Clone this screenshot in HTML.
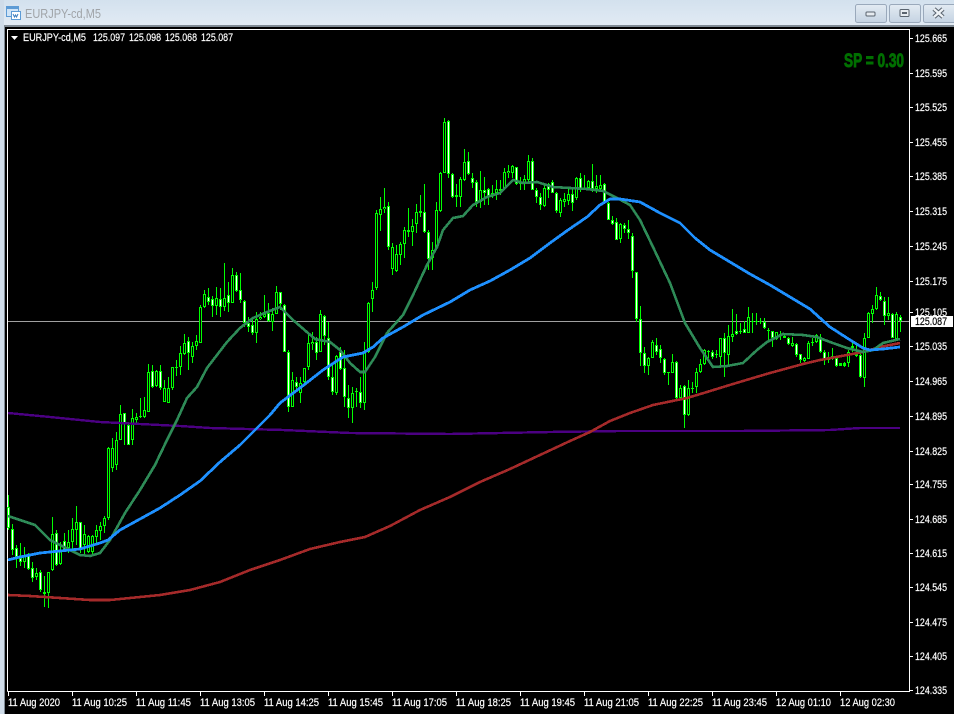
<!DOCTYPE html>
<html><head><meta charset="utf-8"><title>EURJPY-cd,M5</title>
<style>html,body{margin:0;padding:0;background:#000;width:954px;height:714px;overflow:hidden}svg{display:block}text{font-family:"Liberation Sans",sans-serif}</style></head>
<body>
<svg width="954" height="714" viewBox="0 0 954 714" xmlns="http://www.w3.org/2000/svg">
<defs><linearGradient id="t" x1="0" y1="0" x2="0" y2="1"><stop offset="0" stop-color="#d3e1ee"/><stop offset="1" stop-color="#e2ebf4"/></linearGradient>
<linearGradient id="b" x1="0" y1="0" x2="0" y2="1"><stop offset="0" stop-color="#e3ebf3"/><stop offset="1" stop-color="#c5d3e2"/></linearGradient></defs>
<rect width="954" height="714" fill="#000"/>
<rect width="954" height="26" fill="url(#t)"/>
<rect y="25" width="954" height="2" fill="#7f8a94"/>
<rect width="4" height="714" fill="#cfdce9"/>
<rect x="4" y="27" width="1" height="687" fill="#7f8a94"/>
<!-- window icon -->
<rect x="6.500" y="6.500" width="12" height="10" fill="#cfe4f7" stroke="#5d9bd5"/><rect x="7" y="7" width="11" height="2" fill="#5d9bd5"/>
<rect x="11.500" y="11.500" width="9" height="8" fill="#fff" stroke="#5d9bd5"/><path d="M13 14l1.500 3 1-2 1 2 1.500-3" fill="none" stroke="#3e7fbf"/>
<text x="25" y="18" font-size="13" fill="#a0a4a8" textLength="76" lengthAdjust="spacingAndGlyphs">EURJPY-cd,M5</text>
<!-- buttons -->
<g stroke="#9aa9bb" fill="url(#b)"><rect x="855.500" y="4.500" width="31" height="18" rx="2"/><rect x="889.500" y="4.500" width="31" height="18" rx="2"/><rect x="923.500" y="4.500" width="35" height="18" rx="2"/></g>
<rect x="866" y="12" width="9" height="4" fill="#e6ebf0" stroke="#59636e" rx="1"/>
<rect x="900" y="9.500" width="9" height="7" fill="#e6ebf0" stroke="#59636e" rx="1"/><rect x="902" y="12" width="5" height="2" fill="#59636e"/>
<path d="M934 9l9 8M943 9l-9 8" stroke="#59636e" stroke-width="4.500"/><path d="M934 9l9 8M943 9l-9 8" stroke="#eef2f6" stroke-width="2.400"/>
<!-- chart frame -->
<path d="M7.500 691.500V29.500H909.500V691.500H7.500" fill="none" stroke="#fff"/>
<g shape-rendering="crispEdges" fill="none">
<path d="M8 321.500H909" stroke="#a0a0a0"/>
<!-- axis ticks -->
<path stroke="#fff" d="M910 38.500h3M910 73.500h3M910 107.500h3M910 142.500h3M910 176.500h3M910 211.500h3M910 246.500h3M910 281.500h3M910 312.500h3M910 346.500h3M910 381.500h3M910 416.500h3M910 451.500h3M910 484.500h3M910 519.500h3M910 553.500h3M910 587.500h3M910 622.500h3M910 656.500h3M910 690.500h3M8.500 692v4M72.500 692v4M136.500 692v4M200.500 692v4M264.500 692v4M328.500 692v4M392.500 692v4M456.500 692v4M520.500 692v4M584.500 692v4M648.500 692v4M712.500 692v4M776.500 692v4M840.500 692v4"/>
<!-- wicks -->
<path stroke="#00ff00" d="M8.500 495V530M12.500 524V555M16.500 545V568M20.500 543V566M24.500 547V568M28.500 553V570M32.500 562V582M36.500 568V580M40.500 570V592M44.500 576V607M48.500 572V608M52.500 517V571M56.500 530V566M60.500 542V565M64.500 533V552M68.500 530V553M72.500 518V550M76.500 506V545M80.500 522V553M84.500 525V555M88.500 535V553M92.500 535V555M96.500 525V545M100.500 522V540M104.500 516V533M108.500 447V520M112.500 438V472M116.500 432V470M120.500 405V440M124.500 413V445M128.500 423V445M132.500 409V445M136.500 413V425M140.500 398V418M144.500 397V418M148.500 364V412M152.500 365V388M156.500 370V387M160.500 365V390M164.500 380V402M168.500 377V403M172.500 367V390M176.500 360V376M180.500 346V375M184.500 334V355M188.500 337V370M192.500 342V363M196.500 335V350M200.500 305V343M204.500 290V308M208.500 288V305M212.500 296V317M216.500 287V315M220.500 288V317M224.500 263V311M228.500 282V312M232.500 268V303M236.500 272V292M240.500 273V303M244.500 300V327M248.500 317V332M252.500 317V335M256.500 312V343M260.500 312V320M264.500 295V318M268.500 303V322M272.500 308V331M276.500 286V314M280.500 292V310M284.500 304V352M288.500 350V412M292.500 372V407M296.500 377V390M300.500 377V403M304.500 368V383M308.500 333V370M312.500 332V350M316.500 337V360M320.500 310V352M324.500 315V345M328.500 322V380M332.500 365V395M336.500 355V395M340.500 347V370M344.500 350V407M348.500 385V418M352.500 387V423M356.500 388V407M360.500 377V408M364.500 342V410M368.500 302V353M372.500 282V312M376.500 210V290M380.500 197V231M384.500 188V213M388.500 202V250M392.500 243V275M396.500 245V272M400.500 242V265M404.500 227V258M408.500 208V237M412.500 219V246M416.500 204V233M420.500 195V217M424.500 184V233M428.500 230V270M432.500 242V270M436.500 202V250M440.500 172V212M444.500 118V173M448.500 120V178M452.500 173V198M456.500 184V207M460.500 177V207M464.500 149V181M468.500 152V175M472.500 173V188M476.500 180V207M480.500 171V208M484.500 177V205M488.500 188V205M492.500 185V198M496.500 180V200M500.500 180V195M504.500 168V190M508.500 165V178M512.500 165V178M516.500 167V185M520.500 177V190M524.500 175V190M528.500 155V182M532.500 158V190M536.500 188V203M540.500 193V210M544.500 185V207M548.500 183V198M552.500 180V193M556.500 192V213M560.500 198V217M564.500 193V207M568.500 187V205M572.500 187V211M576.500 177V200M580.500 173V192M584.500 175V190M588.500 180V188M592.500 164V192M596.500 175V193M600.500 175V192M604.500 183V203M608.500 202V220M612.500 216V225M616.500 218V240M620.500 223V243M624.500 223V233M628.500 220V239M632.500 233V278M636.500 272V322M640.500 306V366M644.500 347V373M648.500 357V375M652.500 340V358M656.500 338V355M660.500 345V363M664.500 358V375M668.500 372V385M672.500 354V373M676.500 361V399M680.500 385V399M684.500 385V428M688.500 380V416M692.500 382V393M696.500 368V393M700.500 359V373M704.500 349V365M708.500 350V358M712.500 350V359M716.500 350V358M720.500 338V368M724.500 333V377M728.500 325V365M732.500 309V342M736.500 314V335M740.500 323V334M744.500 321V333M748.500 307V333M752.500 313V333M756.500 313V325M760.500 318V324M764.500 318V329M768.500 328V340M772.500 331V347M776.500 332V340M780.500 331V340M784.500 333V338M788.500 337V345M792.500 337V347M796.500 343V357M800.500 354V363M804.500 357V362M808.500 341V359M812.500 338V346M816.500 334V343M820.500 334V353M824.500 350V365M828.500 352V363M832.500 348V360M836.500 357V367M840.500 363V366M844.500 362V367M848.500 350V367M852.500 343V352M856.500 343V357M860.500 352V378M864.500 333V387M868.500 312V338M872.500 305V323M876.500 287V310M880.500 292V301M884.500 297V325M888.500 297V320M892.500 313V338M896.500 312V340M900.500 315V332"/>
<!-- bodies -->
<path stroke="#00ff00" stroke-width="3" d="M8.500 507V528M12.500 529V550M16.500 548V557M20.500 558V562M24.500 555V562M28.500 555V569M32.500 568V578M36.500 573V577M40.500 572V590M44.500 592V594M48.500 572V593M52.500 534V570M56.500 533V565M60.500 550V564M64.500 541V552M68.500 542V548M72.500 529V542M76.500 522V530M80.500 522V549M84.500 534V545M88.500 536V552M92.500 536V552M96.500 530V537M100.500 526V531M104.500 518V526M108.500 448V518M112.500 448V468M116.500 440V465M120.500 414V440M124.500 413V423M128.500 425V445M132.500 418V440M136.500 417V420M140.500 416V417M144.500 410V417M148.500 372V412M152.500 371V387M156.500 371V386M160.500 371V388M164.500 388V402M168.500 388V403M172.500 367V388M176.500 367V368M180.500 353V367M184.500 343V354M188.500 341V353M192.500 346V357M196.500 341V346M200.500 307V343M204.500 294V307M208.500 297V302M212.500 299V306M216.500 298V306M220.500 299V307M224.500 298V307M228.500 295V303M232.500 275V303M236.500 275V291M240.500 290V300M244.500 301V323M248.500 323V327M252.500 325V333M256.500 319V333M260.500 317V319M264.500 314V317M268.500 313V321M272.500 314V322M276.500 292V314M280.500 292V304M284.500 305V352M288.500 352V407M292.500 380V407M296.500 382V387M300.500 383V393M304.500 368V382M308.500 343V367M312.500 342V344M316.500 342V353M320.500 314V352M324.500 316V336M328.500 338V377M332.500 377V392M336.500 356V393M340.500 352V369M344.500 368V397M348.500 398V408M352.500 393V408M356.500 391V392M360.500 392V403M364.500 352V403M368.500 303V352M372.500 290V299M376.500 213V288M380.500 209V215M384.500 207V209M388.500 206V247M392.500 247V269M396.500 254V271M400.500 244V255M404.500 230V244M408.500 230V232M412.500 226V232M416.500 212V224M420.500 211V213M424.500 212V232M428.500 232V259M432.500 250V258M436.500 210V248M440.500 173V211M444.500 122V173M448.500 121V174M452.500 174V197M456.500 195V197M460.500 179V197M464.500 162V180M468.500 161V174M472.500 178V183M476.500 182V202M480.500 190V202M484.500 190V193M488.500 189V196M492.500 193V195M496.500 189V193M500.500 189V191M504.500 172V189M508.500 171V173M512.500 166V173M516.500 167V184M520.500 183V184M524.500 179V183M528.500 161V180M532.500 161V190M536.500 190V197M540.500 197V205M544.500 188V206M548.500 184V190M552.500 182V193M556.500 193V211M560.500 200V213M564.500 199V202M568.500 194V201M572.500 194V203M576.500 178V198M580.500 178V190M584.500 188V189M588.500 181V188M592.500 181V189M596.500 186V189M600.500 185V189M604.500 184V203M608.500 203V220M612.500 220V224M616.500 222V240M620.500 224V239M624.500 225V229M628.500 229V233M632.500 236V271M636.500 272V319M640.500 319V353M644.500 353V366M648.500 358V366M652.500 342V358M656.500 345V352M660.500 349V358M664.500 359V373M668.500 372V373M672.500 362V373M676.500 362V398M680.500 388V398M684.500 386V415M688.500 388V415M692.500 388V389M696.500 372V387M700.500 364V372M704.500 350V364M708.500 351V352M712.500 352V357M716.500 354V355M720.500 338V357M724.500 338V353M728.500 336V355M732.500 334V337M736.500 331V334M740.500 331V332M744.500 329V333M748.500 317V333M752.500 321V322M756.500 321V322M760.500 321V322M764.500 322V328M768.500 330V331M772.500 331V338M776.500 332V339M780.500 334V336M784.500 336V338M788.500 338V344M792.500 343V346M796.500 344V355M800.500 354V360M804.500 358V361M808.500 343V359M812.500 342V343M816.500 335V342M820.500 337V352M824.500 352V360M828.500 357V360M832.500 356V358M836.500 358V366M840.500 363V366M844.500 363V366M848.500 352V363M852.500 346V348M856.500 353V356M860.500 355V377M864.500 338V378M868.500 313V338M872.500 309V314M876.500 295V309M880.500 296V300M884.500 301V316M888.500 313V316M892.500 314V338M896.500 314V339M900.500 317V321"/>
<!-- bull centres -->
<path stroke="#000" d="M24.500 556V561M36.500 574V576M48.500 573V592M52.500 535V569M60.500 551V563M68.500 543V547M72.500 530V541M76.500 523V529M84.500 535V544M88.500 537V551M92.500 537V551M96.500 531V536M100.500 527V530M104.500 519V525M108.500 449V517M112.500 449V467M116.500 441V464M120.500 415V439M132.500 419V439M136.500 418V419M144.500 411V416M148.500 373V411M156.500 372V385M164.500 389V401M168.500 389V402M172.500 368V387M180.500 354V366M184.500 344V353M192.500 347V356M196.500 342V345M200.500 308V342M204.500 295V306M216.500 299V305M224.500 299V306M232.500 276V302M256.500 320V332M260.500 318V319M264.500 315V316M272.500 315V321M276.500 293V313M292.500 381V406M300.500 384V392M304.500 369V381M308.500 344V366M312.500 343V344M320.500 315V351M336.500 357V392M352.500 394V407M364.500 353V402M368.500 304V351M372.500 291V298M376.500 214V287M380.500 210V214M384.500 208V209M392.500 248V268M396.500 255V270M400.500 245V254M404.500 231V243M412.500 227V231M416.500 213V223M432.500 251V257M436.500 211V247M440.500 174V210M444.500 123V172M460.500 180V196M464.500 163V179M480.500 191V201M492.500 194V195M496.500 190V192M504.500 173V188M508.500 172V173M512.500 167V172M524.500 180V182M528.500 162V179M544.500 189V205M560.500 201V212M564.500 200V201M568.500 195V200M576.500 179V197M588.500 182V187M596.500 187V188M600.500 186V188M620.500 225V238M648.500 359V365M652.500 343V357M672.500 363V372M680.500 389V397M688.500 389V414M696.500 373V386M700.500 365V371M704.500 351V363M720.500 339V356M728.500 337V354M732.500 335V336M748.500 318V332M776.500 333V338M792.500 344V345M804.500 359V360M808.500 344V358M816.500 336V341M828.500 358V359M848.500 353V362M864.500 339V377M868.500 314V337M872.500 310V313M876.500 296V308M888.500 314V315M896.500 315V338"/>
<!-- bear centres -->
<path stroke="#fff" d="M8.500 508V527M12.500 530V549M16.500 549V556M20.500 559V561M28.500 556V568M32.500 569V577M40.500 573V589M56.500 534V564M64.500 542V551M80.500 523V548M124.500 414V422M128.500 426V444M152.500 372V386M160.500 372V387M188.500 342V352M208.500 298V301M212.500 300V305M220.500 300V306M228.500 296V302M236.500 276V290M240.500 291V299M244.500 302V322M248.500 324V326M252.500 326V332M268.500 314V320M280.500 293V303M284.500 306V351M288.500 353V406M296.500 383V386M316.500 343V352M324.500 317V335M328.500 339V376M332.500 378V391M340.500 353V368M344.500 369V396M348.500 399V407M360.500 393V402M388.500 207V246M424.500 213V231M428.500 233V258M448.500 122V173M452.500 175V196M468.500 162V173M472.500 179V182M476.500 183V201M484.500 191V192M488.500 190V195M516.500 168V183M532.500 162V189M536.500 191V196M540.500 198V204M548.500 185V189M552.500 183V192M556.500 194V210M572.500 195V202M580.500 179V189M592.500 182V188M604.500 185V202M608.500 204V219M612.500 221V223M616.500 223V239M624.500 226V228M628.500 230V232M632.500 237V270M636.500 273V318M640.500 320V352M644.500 354V365M656.500 346V351M660.500 350V357M664.500 360V372M676.500 363V397M684.500 387V414M712.500 353V356M724.500 339V352M736.500 332V333M744.500 330V332M764.500 323V327M772.500 332V337M788.500 339V343M796.500 345V354M800.500 355V359M820.500 338V351M824.500 353V359M836.500 359V365M860.500 356V376M880.500 297V299M884.500 302V315M892.500 315V337M900.500 318V320"/>
<!-- MAs -->
<path stroke="#4b0082" stroke-width="2.400" d="M8 413L50 417L100 422L140 424L180 426L210 428L283 430L350 433L400 433.500L450 434L500 433L550 432L620 431L740 431L830 430L860 428L900 428"/>
<path stroke="#a52a2a" stroke-width="2.600" d="M8 595L30 596L60 598L90 600L110 600L130 598L160 595L190 590L220 582L250 570L280 560L310 549L340 542L365 537L390 526L420 510L450 497L480 482L510 469L540 455L570 441L590 432L610 421L630 413L653 405L687 398L707 392L733 384L753 378L770 373L803 364L820 360L847 355L863 352L880 347L900 343"/>
<path stroke="#2e8b57" stroke-width="2.600" d="M8 516L20 520L35 525L45 535L50 540L60 545L70 550L80 555L90 556L100 553L110 540L125 513L140 490L155 465L167 440L177 420L187 398L197 387L207 368L217 355L227 342L240 328L253 318L267 312L280 307L293 320L308 333L315 339L330 342L340 350L350 363L360 372L365 372L375 357L387 333L403 315L413 295L427 265L437 247L443 230L453 218L463 216L473 205L487 197L500 193L513 180L523 183L537 182L553 187L570 188L587 189L603 191L617 198L630 205L640 220L653 247L670 283L685 323L700 348L713 367L727 366L743 363L757 350L767 342L783 334L803 335L817 337L830 342L847 348L863 352L873 350L883 343L900 339"/>
<path stroke="#1e90ff" stroke-width="2.800" d="M8 560L20 557L40 553L60 551L80 549L100 543L108 540L120 530L140 519L160 508L180 495L200 481L220 462L240 445L260 425L270 415L280 403L300 388L323 370L343 357L363 353L373 347L383 338L403 327L423 315L450 302L470 290L490 281L510 270L530 258L550 243L568 230L587 217L600 205L610 199L620 199L640 202L660 213L680 223L695 238L710 250L730 262L750 274L770 285L790 297L810 309L830 327L847 338L863 348L870 350L883 349L900 347"/>
</g>
<!-- current price -->
<rect x="911" y="316" width="42" height="11" fill="#fff"/>
<g font-size="11" fill="#fff" stroke="#fff" stroke-width=".2">
<text x="915" y="42" textLength="32" lengthAdjust="spacingAndGlyphs">125.665</text>
<text x="915" y="77" textLength="32" lengthAdjust="spacingAndGlyphs">125.595</text>
<text x="915" y="111" textLength="32" lengthAdjust="spacingAndGlyphs">125.525</text>
<text x="915" y="146" textLength="32" lengthAdjust="spacingAndGlyphs">125.455</text>
<text x="915" y="180" textLength="32" lengthAdjust="spacingAndGlyphs">125.385</text>
<text x="915" y="215" textLength="32" lengthAdjust="spacingAndGlyphs">125.315</text>
<text x="915" y="250" textLength="32" lengthAdjust="spacingAndGlyphs">125.245</text>
<text x="915" y="285" textLength="32" lengthAdjust="spacingAndGlyphs">125.175</text>
<text x="915" y="316" textLength="32" lengthAdjust="spacingAndGlyphs">125.105</text>
<text x="915" y="350" textLength="32" lengthAdjust="spacingAndGlyphs">125.035</text>
<text x="915" y="385" textLength="32" lengthAdjust="spacingAndGlyphs">124.965</text>
<text x="915" y="420" textLength="32" lengthAdjust="spacingAndGlyphs">124.895</text>
<text x="915" y="455" textLength="32" lengthAdjust="spacingAndGlyphs">124.825</text>
<text x="915" y="488" textLength="32" lengthAdjust="spacingAndGlyphs">124.755</text>
<text x="915" y="523" textLength="32" lengthAdjust="spacingAndGlyphs">124.685</text>
<text x="915" y="557" textLength="32" lengthAdjust="spacingAndGlyphs">124.615</text>
<text x="915" y="591" textLength="32" lengthAdjust="spacingAndGlyphs">124.545</text>
<text x="915" y="626" textLength="32" lengthAdjust="spacingAndGlyphs">124.475</text>
<text x="915" y="660" textLength="32" lengthAdjust="spacingAndGlyphs">124.405</text>
<text x="915" y="694" textLength="32" lengthAdjust="spacingAndGlyphs">124.335</text>
<text x="8" y="706" textLength="52" lengthAdjust="spacingAndGlyphs">11 Aug 2020</text>
<text x="72" y="706" textLength="55" lengthAdjust="spacingAndGlyphs">11 Aug 10:25</text>
<text x="136" y="706" textLength="55" lengthAdjust="spacingAndGlyphs">11 Aug 11:45</text>
<text x="200" y="706" textLength="55" lengthAdjust="spacingAndGlyphs">11 Aug 13:05</text>
<text x="264" y="706" textLength="55" lengthAdjust="spacingAndGlyphs">11 Aug 14:25</text>
<text x="328" y="706" textLength="55" lengthAdjust="spacingAndGlyphs">11 Aug 15:45</text>
<text x="392" y="706" textLength="55" lengthAdjust="spacingAndGlyphs">11 Aug 17:05</text>
<text x="456" y="706" textLength="55" lengthAdjust="spacingAndGlyphs">11 Aug 18:25</text>
<text x="520" y="706" textLength="55" lengthAdjust="spacingAndGlyphs">11 Aug 19:45</text>
<text x="584" y="706" textLength="55" lengthAdjust="spacingAndGlyphs">11 Aug 21:05</text>
<text x="648" y="706" textLength="55" lengthAdjust="spacingAndGlyphs">11 Aug 22:25</text>
<text x="712" y="706" textLength="55" lengthAdjust="spacingAndGlyphs">11 Aug 23:45</text>
<text x="776" y="706" textLength="55" lengthAdjust="spacingAndGlyphs">12 Aug 01:10</text>
<text x="840" y="706" textLength="55" lengthAdjust="spacingAndGlyphs">12 Aug 02:30</text>
<text x="23" y="41" textLength="63" lengthAdjust="spacingAndGlyphs">EURJPY-cd,M5</text>
<text x="93" y="41" textLength="32" lengthAdjust="spacingAndGlyphs">125.097</text>
<text x="129" y="41" textLength="32" lengthAdjust="spacingAndGlyphs">125.098</text>
<text x="165" y="41" textLength="32" lengthAdjust="spacingAndGlyphs">125.068</text>
<text x="201" y="41" textLength="32" lengthAdjust="spacingAndGlyphs">125.087</text>
</g>
<text x="915" y="325" font-size="11" fill="#000" stroke="#000" stroke-width=".2" textLength="32" lengthAdjust="spacingAndGlyphs">125.087</text>
<path d="M11 36h7l-3.500 4z" fill="#fff"/>
<text x="844" y="67" font-size="19" font-weight="bold" fill="#006f00" stroke="#006f00" stroke-width=".9" textLength="60" lengthAdjust="spacingAndGlyphs">SP = 0.30</text>
</svg>
</body></html>
